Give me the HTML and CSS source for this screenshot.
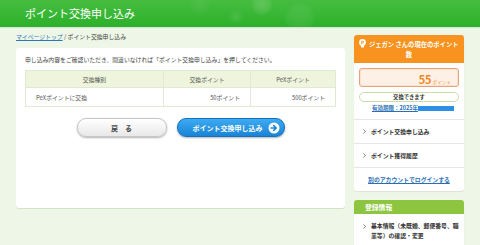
FILE: index.html
```html
<!DOCTYPE html>
<html lang="ja">
<head>
  <meta charset="UTF-8">
  <meta name="viewport" content="width=device-width, initial-scale=1.0">
  <title>ポイント交換申し込み</title>
  <link rel="stylesheet" href="styles.css">
</head>
<body>

  <header class="page-header">
    <h1>ポイント交換申し込み</h1>
  </header>

  <div class="layout">
    <main class="main">
      <nav class="breadcrumb"><a href="#">マイページトップ</a> / ポイント交換申し込み</nav>

      <section class="card">
        <p class="lead">申し込み内容をご確認いただき、間違いなければ「ポイント交換申し込み」を押してください。</p>

        <table class="exchange-table">
          <tr>
            <th class="col-type">交換種別</th>
            <th class="col-point">交換ポイント</th>
            <th class="col-pex">PeXポイント</th>
          </tr>
          <tr>
            <td class="left">PeXポイントに交換</td>
            <td class="right">50ポイント</td>
            <td class="right">500ポイント</td>
          </tr>
        </table>

        <div class="actions">
          <button class="btn-back">戻　る</button>
          <button class="btn-submit">
            ポイント交換申し込み
            <svg class="arrow" width="12" height="12" viewBox="0 0 12 12">
              <circle cx="6" cy="6" r="5.5" fill="#fff"/>
              <path d="M3.2 6h4.6M5.8 3.6L8.2 6 5.8 8.4" fill="none" stroke="#1a86d8" stroke-width="1.6" stroke-linecap="round" stroke-linejoin="round"/>
            </svg>
          </button>
        </div>
      </section>
    </main>

    <aside class="sidebar">
      <div class="side-card">
        <div class="side-head orange">
          <svg class="bulb" width="7" height="9" viewBox="0 0 7 9">
            <circle cx="3.5" cy="3.5" r="3.4" fill="#fff"/>
            <rect x="2" y="6" width="3" height="2.6" rx="0.6" fill="#fff"/>
            <path d="M2.6 5V2.2h1.2a0.9 0.9 0 0 1 0 1.8H2.6" fill="none" stroke="#f7931e" stroke-width="0.8"/>
          </svg>
          ジェガン さんの現在のポイント数
        </div>

        <div class="points-body">
          <div class="points-box"><strong>55</strong><small>ポイント</small></div>
          <div class="status-pill">交換できます</div>
          <a class="expire" href="#">有効期限：2025年<span class="mask"></span></a>
        </div>

        <ul class="side-menu">
          <li>
            <svg class="chev" width="3" height="5" viewBox="0 0 3 5"><path d="M0.4 0.4L2.5 2.5 0.4 4.6" fill="none" stroke="#555" stroke-width="0.7"/></svg>
            <span>ポイント交換申し込み</span>
          </li>
          <li>
            <svg class="chev" width="3" height="5" viewBox="0 0 3 5"><path d="M0.4 0.4L2.5 2.5 0.4 4.6" fill="none" stroke="#555" stroke-width="0.7"/></svg>
            <span>ポイント獲得履歴</span>
          </li>
          <li class="login-row"><a href="#">別のアカウントでログインする</a></li>
        </ul>
      </div>

      <div class="side-card">
        <div class="side-head green">登録情報</div>
        <ul class="side-menu">
          <li class="multi">
            <svg class="chev" width="3" height="5" viewBox="0 0 3 5"><path d="M0.4 0.4L2.5 2.5 0.4 4.6" fill="none" stroke="#555" stroke-width="0.7"/></svg>
            <span>基本情報（未既婚、郵便番号、職業等）の確認・変更</span>
          </li>
        </ul>
      </div>
    </aside>
  </div>

</body>
</html>
```

FILE: styles.css
```css
body {
  margin: 0;
  height: 245px;
  background-color: #eef7e7;
  font-family: "Noto Sans CJK JP", "Noto Sans", sans-serif;
  color: #333;
  overflow: hidden;
}

.page-header {
  height: 27px;
  padding-left: 25px;
  display: flex;
  align-items: center;
  background:
    radial-gradient(circle at 262px 5px, rgba(255,255,255,.16), rgba(255,255,255,.08) 8px, transparent 11px),
    radial-gradient(circle at 300px 18px, rgba(255,255,255,.08), rgba(255,255,255,.05) 12px, transparent 16px),
    radial-gradient(circle at 236px 17px, rgba(255,255,255,.10), transparent 8px),
    radial-gradient(circle at 200px 4px, rgba(255,255,255,.06), transparent 12px),
    linear-gradient(to bottom, #46bd40, #2cb02a);
  box-shadow: 0 1px 1px rgba(0,0,0,.08);
}
.page-header h1 {
  margin: 0 0 2px;
  font-size: 11px;
  font-weight: normal;
  color: #fff;
}

.layout {
  display: flex;
  align-items: flex-start;
  gap: 9px;
  padding: 0 16px;
}

.main {
  width: 329px;
}

.breadcrumb {
  margin-top: 6px;
  font-size: 5.85px;
  line-height: 8px;
  color: #444;
}
.breadcrumb a {
  color: #2a78b8;
}

.card {
  margin-top: 7px;
  height: 160px;
  box-sizing: border-box;
  padding: 8px 9px 0;
  background-color: #fff;
  border-radius: 3px;
  box-shadow: 0 1px 0 #d3e4c6;
}

.lead {
  margin: 0 0 6px;
  font-size: 5.85px;
  line-height: 8px;
  color: #444;
}

.exchange-table {
  width: 311px;
  table-layout: fixed;
  border-collapse: collapse;
  font-size: 5.85px;
  color: #555;
}
.exchange-table th,
.exchange-table td {
  border: 1px solid #e0e9d2;
}
.exchange-table th {
  height: 16px;
  padding: 0;
  font-weight: normal;
  background-color: #eff5dc;
}
.exchange-table td {
  height: 18px;
  padding: 0 10px;
}
.col-type { width: 137px; }
.col-point { width: 86px; }
.left { text-align: left; }
.right { text-align: right; }

.actions {
  margin-top: 11px;
  display: flex;
  justify-content: center;
  gap: 10px;
}
.btn-back,
.btn-submit {
  height: 19px;
  border-radius: 9px;
  font-family: inherit;
  font-size: 7px;
  font-weight: bold;
  cursor: pointer;
  box-shadow: 0 1px 2px rgba(0,0,0,.3);
}
.btn-back {
  width: 90px;
  color: #444;
  border: 1px solid #c6c6c6;
  background: linear-gradient(to bottom, #ffffff, #e8e8e8);
}
.btn-submit {
  width: 108px;
  display: flex;
  align-items: center;
  justify-content: flex-end;
  gap: 5px;
  padding: 0 4px 0 0;
  color: #fff;
  border: 1px solid #1672ba;
  background: linear-gradient(to bottom, #3eaaf2, #1984d6);
}

.sidebar {
  width: 110px;
  margin-top: 8px;
}

.side-card {
  background-color: #fff;
  border-radius: 3px;
  box-shadow: 0 1px 1px rgba(0,0,0,.08);
  margin-bottom: 9px;
  overflow: hidden;
}

.side-head {
  color: #fff;
  font-weight: bold;
}
.side-head.orange {
  height: 28px;
  box-sizing: border-box;
  padding: 4px 5px 0;
  background-color: #f7931e;
  font-size: 6.3px;
  line-height: 10px;
  text-align: center;
}
.side-head.green {
  height: 14px;
  padding-left: 11px;
  background-color: #8dc540;
  font-size: 6.8px;
  line-height: 14px;
}
.bulb {
  vertical-align: -1px;
  margin-right: 1px;
}

.points-body {
  padding: 5px 5px 7px;
}
.points-box {
  height: 19px;
  box-sizing: border-box;
  padding-right: 7px;
  border: 1px solid #e8a478;
  border-radius: 3px;
  background-color: #fdf0e6;
  box-shadow: inset 0 0 0 1px #fbe2d0;
  text-align: right;
  color: #f08a24;
  line-height: 17px;
}
.points-box strong {
  font-size: 11px;
}
.points-box small {
  font-size: 4.6px;
  margin-left: 1px;
}
.status-pill {
  margin-top: 5px;
  height: 10px;
  box-sizing: border-box;
  border: 1px solid #cadbb0;
  border-radius: 5px;
  font-size: 5.3px;
  font-weight: bold;
  line-height: 8px;
  text-align: center;
  color: #333;
}
.expire {
  display: block;
  margin-top: 2px;
  padding-left: 13px;
  font-size: 5.5px;
  font-weight: bold;
  line-height: 8px;
  color: #2a6fb5;
}
.mask {
  display: inline-block;
  width: 36px;
  height: 5px;
  vertical-align: -0.5px;
  background-color: #2d8fe6;
}

.side-menu {
  list-style: none;
  margin: 0;
  padding: 0;
}
.side-menu li {
  height: 23px;
  display: flex;
  align-items: center;
  gap: 5px;
  padding-left: 9px;
  border-top: 1px solid #e6e6e6;
  font-size: 5.85px;
  font-weight: bold;
  color: #333;
}
.side-menu li:first-child {
  border-top: none;
}
.side-card .points-body + .side-menu li:first-child {
  border-top: 1px solid #e6e6e6;
}
.side-menu li.login-row {
  justify-content: center;
  padding-left: 0;
}
.login-row a {
  color: #2a6fb5;
}
.side-menu li.multi {
  height: auto;
  align-items: flex-start;
  padding: 7px 4px 8px 9px;
  line-height: 10px;
}
.multi .chev {
  margin-top: 2.5px;
  flex: none;
}
```
